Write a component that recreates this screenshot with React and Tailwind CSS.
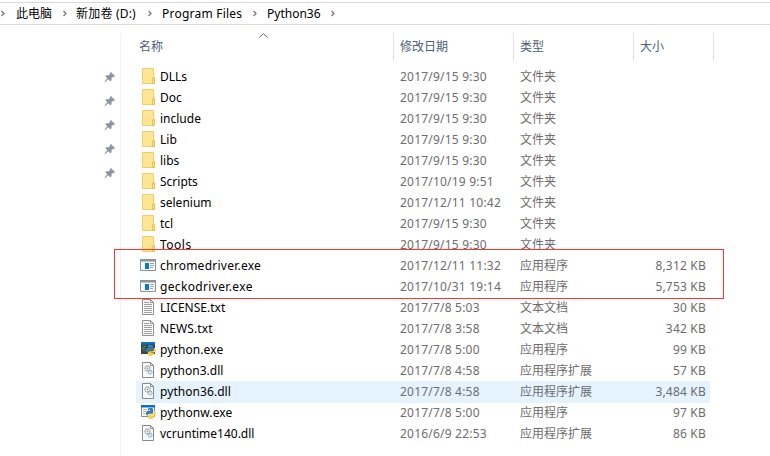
import React from "react";

const rows = [
  ["folder", "DLLs", "2017/9/15 9:30", "文件夹", ""],
  ["folder", "Doc", "2017/9/15 9:30", "文件夹", ""],
  ["folder", "include", "2017/9/15 9:30", "文件夹", ""],
  ["folder", "Lib", "2017/9/15 9:30", "文件夹", ""],
  ["folder", "libs", "2017/9/15 9:30", "文件夹", ""],
  ["folder", "Scripts", "2017/10/19 9:51", "文件夹", ""],
  ["folder", "selenium", "2017/12/11 10:42", "文件夹", ""],
  ["folder", "tcl", "2017/9/15 9:30", "文件夹", ""],
  ["folder", "Tools", "2017/9/15 9:30", "文件夹", "", "tracking-[0.5px]"],
  ["app", "chromedriver.exe", "2017/12/11 11:32", "应用程序", "8,312 KB", "tracking-[0.25px]"],
  ["app", "geckodriver.exe", "2017/10/31 19:14", "应用程序", "5,753 KB", "tracking-[0.35px]"],
  ["text", "LICENSE.txt", "2017/7/8 5:03", "文本文档", "30 KB"],
  ["text", "NEWS.txt", "2017/7/8 3:58", "文本文档", "342 KB", "tracking-[0.12px]"],
  ["python", "python.exe", "2017/7/8 5:00", "应用程序", "99 KB", "tracking-[0.1px]"],
  ["dll", "python3.dll", "2017/7/8 4:58", "应用程序扩展", "57 KB"],
  ["dll", "python36.dll", "2017/7/8 4:58", "应用程序扩展", "3,484 KB", "tracking-[0.06px]"],
  ["pythonw", "pythonw.exe", "2017/7/8 5:00", "应用程序", "97 KB", "tracking-[0.1px]"],
  ["dll", "vcruntime140.dll", "2016/6/9 22:53", "应用程序扩展", "86 KB"],
];

function PythonLogo() {
  return (
    <g>
      <path d="M9.300 4h2.400q1.500 0 1.500 1.500v2.700q0 1.500-1.500 1.500H9.200q-1.500 0-1.500 1.800H7.600q-1.800 0-1.800-2.200t1.800-2.400h2.900v-.4H7.800v-1Q7.800 4 9.300 4z" fill="#3c78b4" />
      <path d="M13.700 7h.5q1.600 0 1.600 2.300t-1.600 2.300h-3v.5h2.500v1.200q0 1.700-2 1.700H9.900q-1.900 0-1.900-1.700v-1.500q0-1.600 1.500-1.600h2.500q1.700 0 1.700-1.500z" fill="#fad046" />
      <circle cx="9.200" cy="5.300" r=".45" fill="#fff" />
    </g>
  );
}

function FileIcon({ kind }) {
  return (
    <svg className="h-[17px] w-[17px] shrink-0" viewBox="0 0 17 17">
      {kind === "folder" && (
        <g>
          <path d="M2.500 .5h11v9h1v6h-12z" fill="#ffe594" stroke="#efce63" />
          <path d="M12.500 15.500v-5.500h2v5.500z" fill="#ffe594" stroke="#e8bf47" />
        </g>
      )}
      {kind === "app" && (
        <g>
          <path d="M.5 2.500h15v11H.5z" fill="#f8fafb" stroke="#8d9499" />
          <path d="M0 2h16v2.500H0z" fill="#8d9499" />
          <path d="M5 6h4v6H5z" fill="#0078d7" />
          <path d="M10 6.500h4M10 8.500h4M10 10.500h3" stroke="#9ba3a8" />
        </g>
      )}
      {kind === "text" && (
        <g>
          <path d="M2.500 .5h8l3 3v12h-11z" fill="#fafafa" stroke="#909090" />
          <path d="M10.500 .5v3h3" fill="none" stroke="#909090" />
          <path d="M4 3.500h5M4 5.500h8M4 7.500h8M4 9.500h8M4 11.500h8M4 13.500h8" stroke="#a0a0a0" />
        </g>
      )}
      {kind === "dll" && (
        <g>
          <path d="M2.500 .5h8l3 3v12h-11z" fill="#fafafa" stroke="#8a8a8a" />
          <path d="M10.500 .5v3h3" fill="none" stroke="#8a8a8a" />
          <circle cx="7.500" cy="6.500" r="2.500" fill="#fff" stroke="#949ca2" strokeWidth="1.300" strokeDasharray="1.300 .4" />
          <circle cx="7.500" cy="6.500" r=".9" fill="#8e979d" />
          <circle cx="10.200" cy="10.200" r="1.800" fill="#e5f0f7" stroke="#82a9c2" strokeWidth="1.200" strokeDasharray="1.200 .4" />
        </g>
      )}
      {kind === "python" && (
        <g>
          <path d="M1 1h14v12H1z" fill="#3c4547" />
          <path d="M1 1h14v2.500H1z" fill="#0873c4" />
          <path d="M3 5.500h3M2 7.500h3M3 9.500h2" stroke="#37a348" />
          <PythonLogo />
        </g>
      )}
      {kind === "pythonw" && (
        <g>
          <path d="M1.500 1.500h13v11h-13z" fill="#fafafa" stroke="#8b8b8b" />
          <path d="M1 1h14v2.500H1z" fill="#0873c4" />
          <path d="M3 5.500h4M3 7.500h3M3 9.500h2" stroke="#b6b6b6" />
          <PythonLogo />
        </g>
      )}
    </svg>
  );
}

function Pin() {
  return (
    <svg className="h-3 w-3" viewBox="0 0 12 12">
      <path d="M6.800 1.200L10.800 5.200 9.700 6 9 5.600 7.300 7.300 7.200 9.500 6.300 10 4.200 7.900 1.200 10.800.8 10.500 3.500 7.200 1.600 5.200 2.300 4.600 4.600 4.500 6.400 2.800 6.100 2z" fill="#8996a1" stroke="#8996a1" strokeWidth=".5" />
    </svg>
  );
}

function Chevron() {
  return (
    <svg className="h-[7px] w-[5px] shrink-0" viewBox="0 0 5 7">
      <path d="M1.500 1l2.500 2.500L1.500 6" fill="none" stroke="#777" strokeWidth="1.300" />
    </svg>
  );
}

const HeaderCell = ({ className, children }) => (
  <div className={"h-7 border-r border-[#e2e2e2] leading-[28px] " + className}>{children}</div>
);

export default function App() {
  return (
    <div className="relative flex h-[456px] w-[770px] flex-col overflow-hidden bg-white font-['Noto_Sans','Noto_Sans_CJK_SC',sans-serif] text-[12px] whitespace-nowrap text-black">
      <div className="mt-[2px] flex h-[23px] shrink-0 items-center border-y border-[#d9d9d9]">
        <div className="w-4"><Chevron /></div>
        <span className="w-[46px]">此电脑</span>
        <div className="w-[14px]"><Chevron /></div>
        <span className="w-[71px] tracking-[0.2px]">新加卷 (D:)</span>
        <div className="w-[15px]"><Chevron /></div>
        <span className="w-[90px] tracking-[0.23px]">Program Files</span>
        <div className="w-[15px]"><Chevron /></div>
        <span className="w-[63px]">Python36</span>
        <Chevron />
      </div>
      <div className="mt-2 flex grow">
        <div className="flex w-[121px] shrink-0 flex-col items-end gap-3 border-r border-[#f2f2f2] pt-[38px] pr-[4px]">
          {[0, 1, 2, 3, 4].map((i) => <Pin key={i} />)}
        </div>
        <div className="w-[649px]">
          <div className="flex text-[#4c607a]">
            <HeaderCell className="flex w-[273px] pl-[18px]">
              <span className="w-[120px]">名称</span>
              <svg className="h-[6px] w-[9px]" viewBox="0 0 9 6"><path d="M.5 4.500L4.500 .7l4 3.800" fill="none" stroke="#666" /></svg>
            </HeaderCell>
            <HeaderCell className="w-[120px] pl-[6px]">修改日期</HeaderCell>
            <HeaderCell className="w-[120px] pl-[6px]">类型</HeaderCell>
            <HeaderCell className="w-[80px] pl-[6px]">大小</HeaderCell>
          </div>
          <div className="mt-[5px] ml-[15px] w-[574px]">
            {rows.map(([kind, name, date, type, size, tracking = ""]) => (
              <div key={name} className={"flex h-[21px] items-center pr-1 pl-1 text-[#6d6d6d] " + (name === "python36.dll" ? "bg-[#e5f3ff] shadow-[0_1px_0_#e5f3ff]" : "")}>
                <FileIcon kind={kind} />
                <span className={"ml-[3px] w-[240px] text-black " + tracking}>{name}</span>
                <span className="w-[120px] tracking-[0.21px]">{date}</span>
                <span className="w-[100px]">{type}</span>
                <span className="grow text-right tracking-[0.2px]">{size}</span>
              </div>
            ))}
          </div>
        </div>
      </div>
      <div className="absolute top-[249px] left-[114px] h-[50px] w-[610px] border border-[#ff3434]" />
    </div>
  );
}
